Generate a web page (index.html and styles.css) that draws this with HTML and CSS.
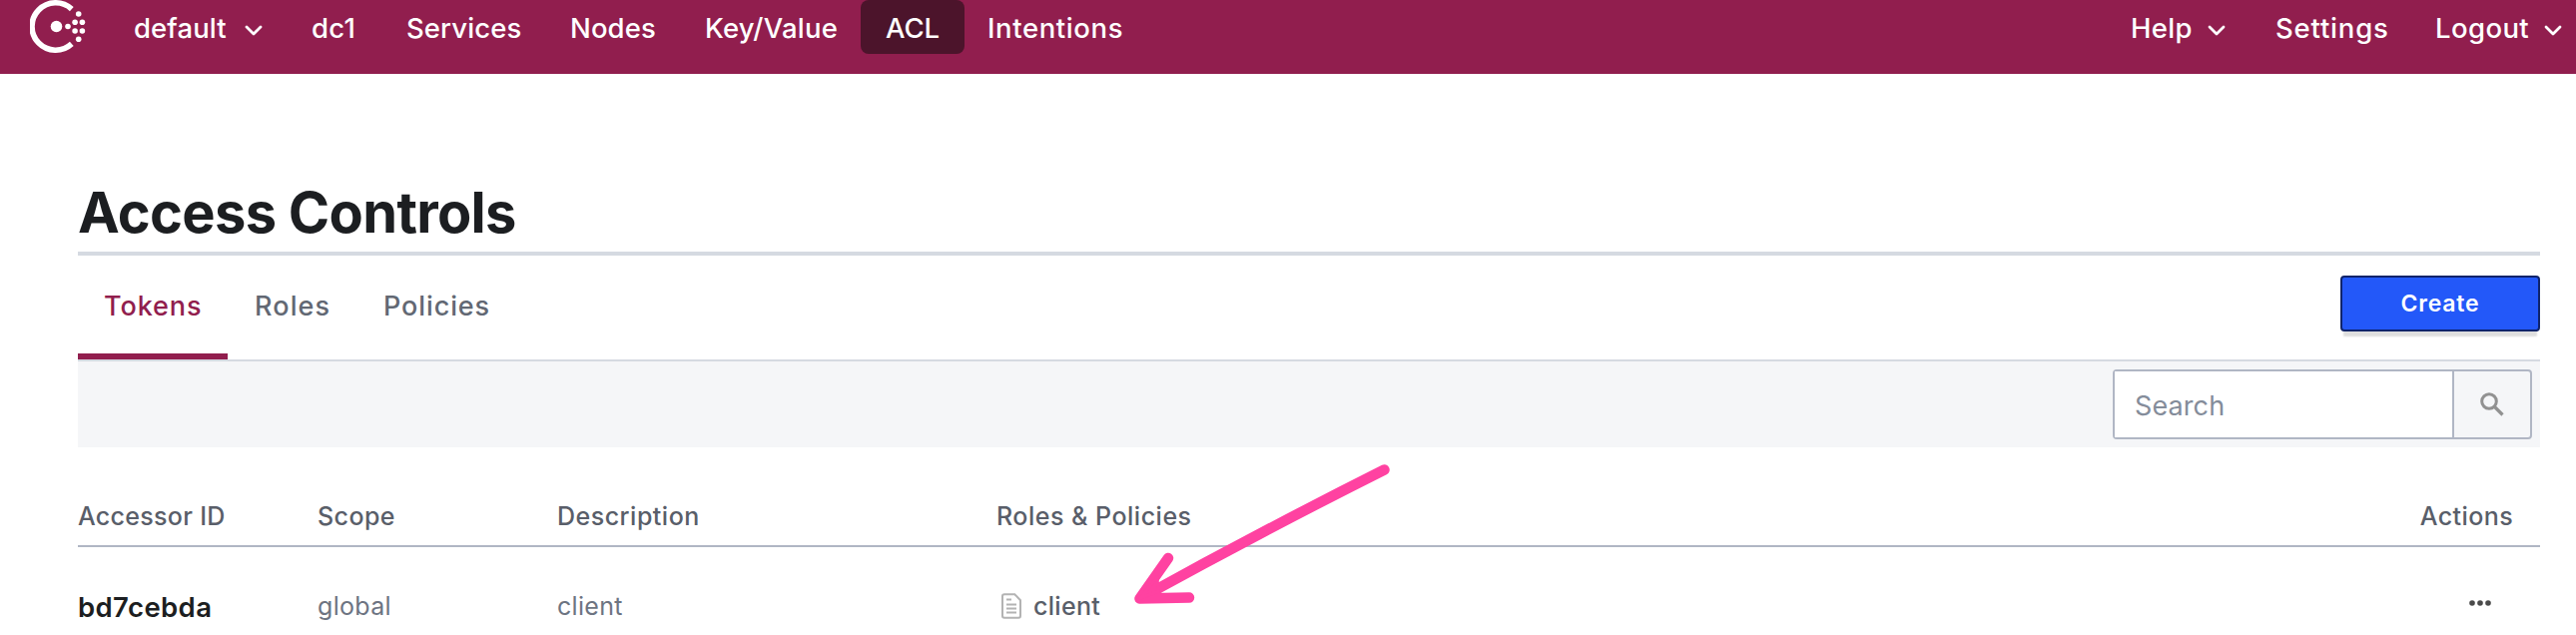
FILE: index.html
```html
<!DOCTYPE html>
<html lang="en">
<head>
<meta charset="utf-8">
<title>Access Controls</title>
<link rel="stylesheet" href="styles.css">
</head>
<body>
<header class="topbar">
  <svg class="logo" width="56" height="54" viewBox="0 0 56 54" fill="#fff">
    <path d="M41.8 9.1A23.7 23.7 0 1 0 41.8 43.9" fill="none" stroke="#fff" stroke-width="5.6"/>
    <circle cx="26.5" cy="26.5" r="5.8"/><circle cx="38" cy="26.5" r="2.8"/>
    <circle cx="45.1" cy="22.3" r="2.8"/><circle cx="52.4" cy="22.3" r="2.8"/>
    <circle cx="45.1" cy="31" r="2.8"/><circle cx="52.4" cy="31" r="2.8"/>
    <circle cx="48.7" cy="14" r="2.8"/><circle cx="48.7" cy="39.3" r="2.8"/>
  </svg>
  <nav class="nav-main">
    <a class="nav-item nav-default">default<svg class="chevron" width="18" height="12" viewBox="0 0 18 12"><path d="M2 2l7 7 7-7"/></svg></a>
    <a class="nav-item nav-dc">dc1</a>
    <a class="nav-item nav-services">Services</a>
    <a class="nav-item nav-nodes">Nodes</a>
    <a class="nav-item nav-kv">Key/Value</a>
    <a class="nav-item nav-acl">ACL</a>
    <a class="nav-item nav-intentions">Intentions</a>
  </nav>
  <nav class="nav-side">
    <a class="nav-item nav-help">Help<svg class="chevron" width="18" height="12" viewBox="0 0 18 12"><path d="M2 2l7 7 7-7"/></svg></a>
    <a class="nav-item nav-settings">Settings</a>
    <a class="nav-item nav-logout">Logout<svg class="chevron" width="18" height="12" viewBox="0 0 18 12"><path d="M2 2l7 7 7-7"/></svg></a>
  </nav>
</header>
<main class="content">
  <h1 class="title">Access Controls</h1>
  <div class="tabs">
    <a class="tab tab-active">Tokens</a>
    <a class="tab tab-roles">Roles</a>
    <a class="tab tab-policies">Policies</a>
    <button class="create">Create</button>
  </div>
  <div class="filter">
    <div class="search">
      <div class="search-field">Search</div>
      <div class="search-button">
        <svg width="24" height="24" viewBox="0 0 24 24" fill="none" stroke="#919191" stroke-width="3"><circle cx="9" cy="9" r="7.3"/><path d="M14.5 14.5l8 8" stroke-width="3.2"/></svg>
      </div>
    </div>
  </div>
  <div class="row row-head">
    <span class="h-id">Accessor ID</span><span class="h-scope">Scope</span><span class="h-desc">Description</span><span class="h-roles">Roles &amp; Policies</span><span class="h-actions">Actions</span>
  </div>
  <div class="row row-body">
    <span class="token-id">bd7cebda</span>
    <span class="muted">global</span>
    <span class="muted">client</span>
    <span class="policy">
      <svg width="20" height="26" viewBox="0 0 20 26" fill="none" stroke="#b3b3b3" stroke-width="2"><path d="M3 1.2h10.3L19 7.2V23q0 1.8-1.8 1.8H3Q1 24.8 1 23V3q0-1.8 2-1.8z"/><path d="M5 6.5h5M5 11.5h10M5 15.5h10M5 19.5h10"/></svg>
      <span class="policy-name">client</span>
    </span>
    <svg class="dots" width="22" height="6" viewBox="0 0 22 6" fill="#4a4a4a"><circle cx="3" cy="3" r="2.8"/><circle cx="11" cy="3" r="2.8"/><circle cx="19" cy="3" r="2.8"/></svg>
  </div>
</main>
<svg class="arrow" width="270" height="150" viewBox="1130 460 270 150" fill="none" stroke="#ff42a1" stroke-width="10.5" stroke-linecap="round" stroke-linejoin="round"><path d="M1386.5 470.5Q1262 533 1141.5 599.5M1170 559L1141.5 599.5L1191 598.5"/><path d="M1141.5 599.5L1159 578L1160 592z" stroke-width="3" fill="#ff42a1"/></svg>
</body>
</html>
```
FILE: styles.css
```css
* { box-sizing: border-box; }
body {
  margin: 0;
  height: 636px;
  overflow: hidden;
  background: #fff;
  font-family: Inter, "Liberation Sans", sans-serif;
}
.topbar {
  display: flex;
  height: 74px;
  padding-left: 30px;
  background: #911e4e;
  color: #fff;
}
.logo { flex: none; }
.nav-main { display: flex; margin-left: 48px; }
.nav-side { display: flex; margin-left: auto; }
.nav-item {
  display: flex;
  align-items: center;
  height: 54px;
  padding-top: 2px;
  font-size: 27.5px;
  font-weight: 500;
  letter-spacing: 0.1px;
  white-space: nowrap;
}
.chevron {
  margin: 5px 14px 0 auto;
  fill: none;
  stroke: #fff;
  stroke-width: 2.8;
  stroke-linecap: round;
  stroke-linejoin: round;
}
.nav-default { width: 178px; padding-right: 35px; }
.nav-dc { width: 95px; letter-spacing: 0.3px; }
.nav-services { width: 164px; }
.nav-nodes { width: 135px; }
.nav-kv { width: 156px; letter-spacing: 0.2px; }
.nav-acl {
  width: 104px;
  padding-left: 25px;
  border-radius: 8px;
  background: #4c142b;
  letter-spacing: -0.1px;
}
.nav-intentions { margin-left: 23px; letter-spacing: 0.6px; }
.nav-help { width: 145px; padding-right: 36px; letter-spacing: 0.3px; }
.nav-settings { width: 160px; letter-spacing: 0.8px; }
.nav-logout { width: 141px; letter-spacing: 0.4px; }

.content { width: 2466px; margin-left: 78px; }
.title {
  height: 182px;
  margin: 0;
  padding-top: 105px;
  border-bottom: 4px solid #d5dae1;
  color: #1c1e21;
  font-size: 56px;
  font-weight: 700;
  line-height: 68px;
  letter-spacing: -0.7px;
}
.tabs {
  display: flex;
  height: 106px;
  border-bottom: 2px solid #d5dae1;
  color: #626873;
}
.tab {
  height: 104px;
  padding: 0 27px;
  font-size: 27px;
  font-weight: 500;
  line-height: 102px;
  letter-spacing: 0.9px;
}
.tab-active {
  width: 150px;
  padding-left: 26px;
  border-bottom: 6px solid #911e4e;
  color: #911e4e;
}
.tab-roles { width: 129px; letter-spacing: 1.1px; }
.create {
  width: 200px;
  height: 56px;
  margin: 20px 0 0 auto;
  padding: 0;
  border: 2px solid #10246b;
  border-radius: 4px;
  background: #2358f9;
  color: #fff;
  box-shadow: 0 8px 2px -3px #dedede;
  font: 600 23px/50px Inter, sans-serif;
  letter-spacing: 0.8px;
}
.filter {
  display: flex;
  justify-content: flex-end;
  height: 86px;
  padding: 8px;
  background: #f5f6f8;
}
.search {
  display: flex;
  width: 420px;
  height: 70px;
  border: 2px solid #b0b6c4;
  border-radius: 4px;
}
.search-field {
  flex: 1;
  padding-left: 20px;
  background: #fff;
  color: #848c9a;
  font-size: 27px;
  line-height: 69px;
  letter-spacing: 0.1px;
}
.search-button {
  display: flex;
  align-items: center;
  justify-content: center;
  width: 78px;
  border-left: 2px solid #b0b6c4;
}
.row { display: grid; grid-template-columns: 240px 240px 440px 1fr auto; }
.row-head {
  height: 100px;
  padding: 54px 27px 0 0;
  border-bottom: 2px solid #b0b6c4;
  color: #595e69;
  font-size: 25px;
  font-weight: 500;
  line-height: 31px;
  letter-spacing: 0.4px;
}
.h-id { letter-spacing: 0.3px; }
.h-desc, .h-roles { letter-spacing: 0.5px; }
.row-body {
  height: 88px;
  padding-top: 38px;
  font-size: 25px;
  line-height: 42px;
  letter-spacing: 0.3px;
}
.muted { color: #6d7482; }
.token-id {
  color: #1c1e21;
  font-size: 27.5px;
  font-weight: 600;
  line-height: 45px;
  letter-spacing: 0.4px;
}
.policy {
  display: flex;
  align-items: center;
  height: 42px;
  padding-left: 5px;
  gap: 12px;
  color: #595e69;
  font-weight: 500;
}
.dots { margin: 15px 49px 0 0; }
.arrow { position: absolute; left: 1130px; top: 460px; }
```
